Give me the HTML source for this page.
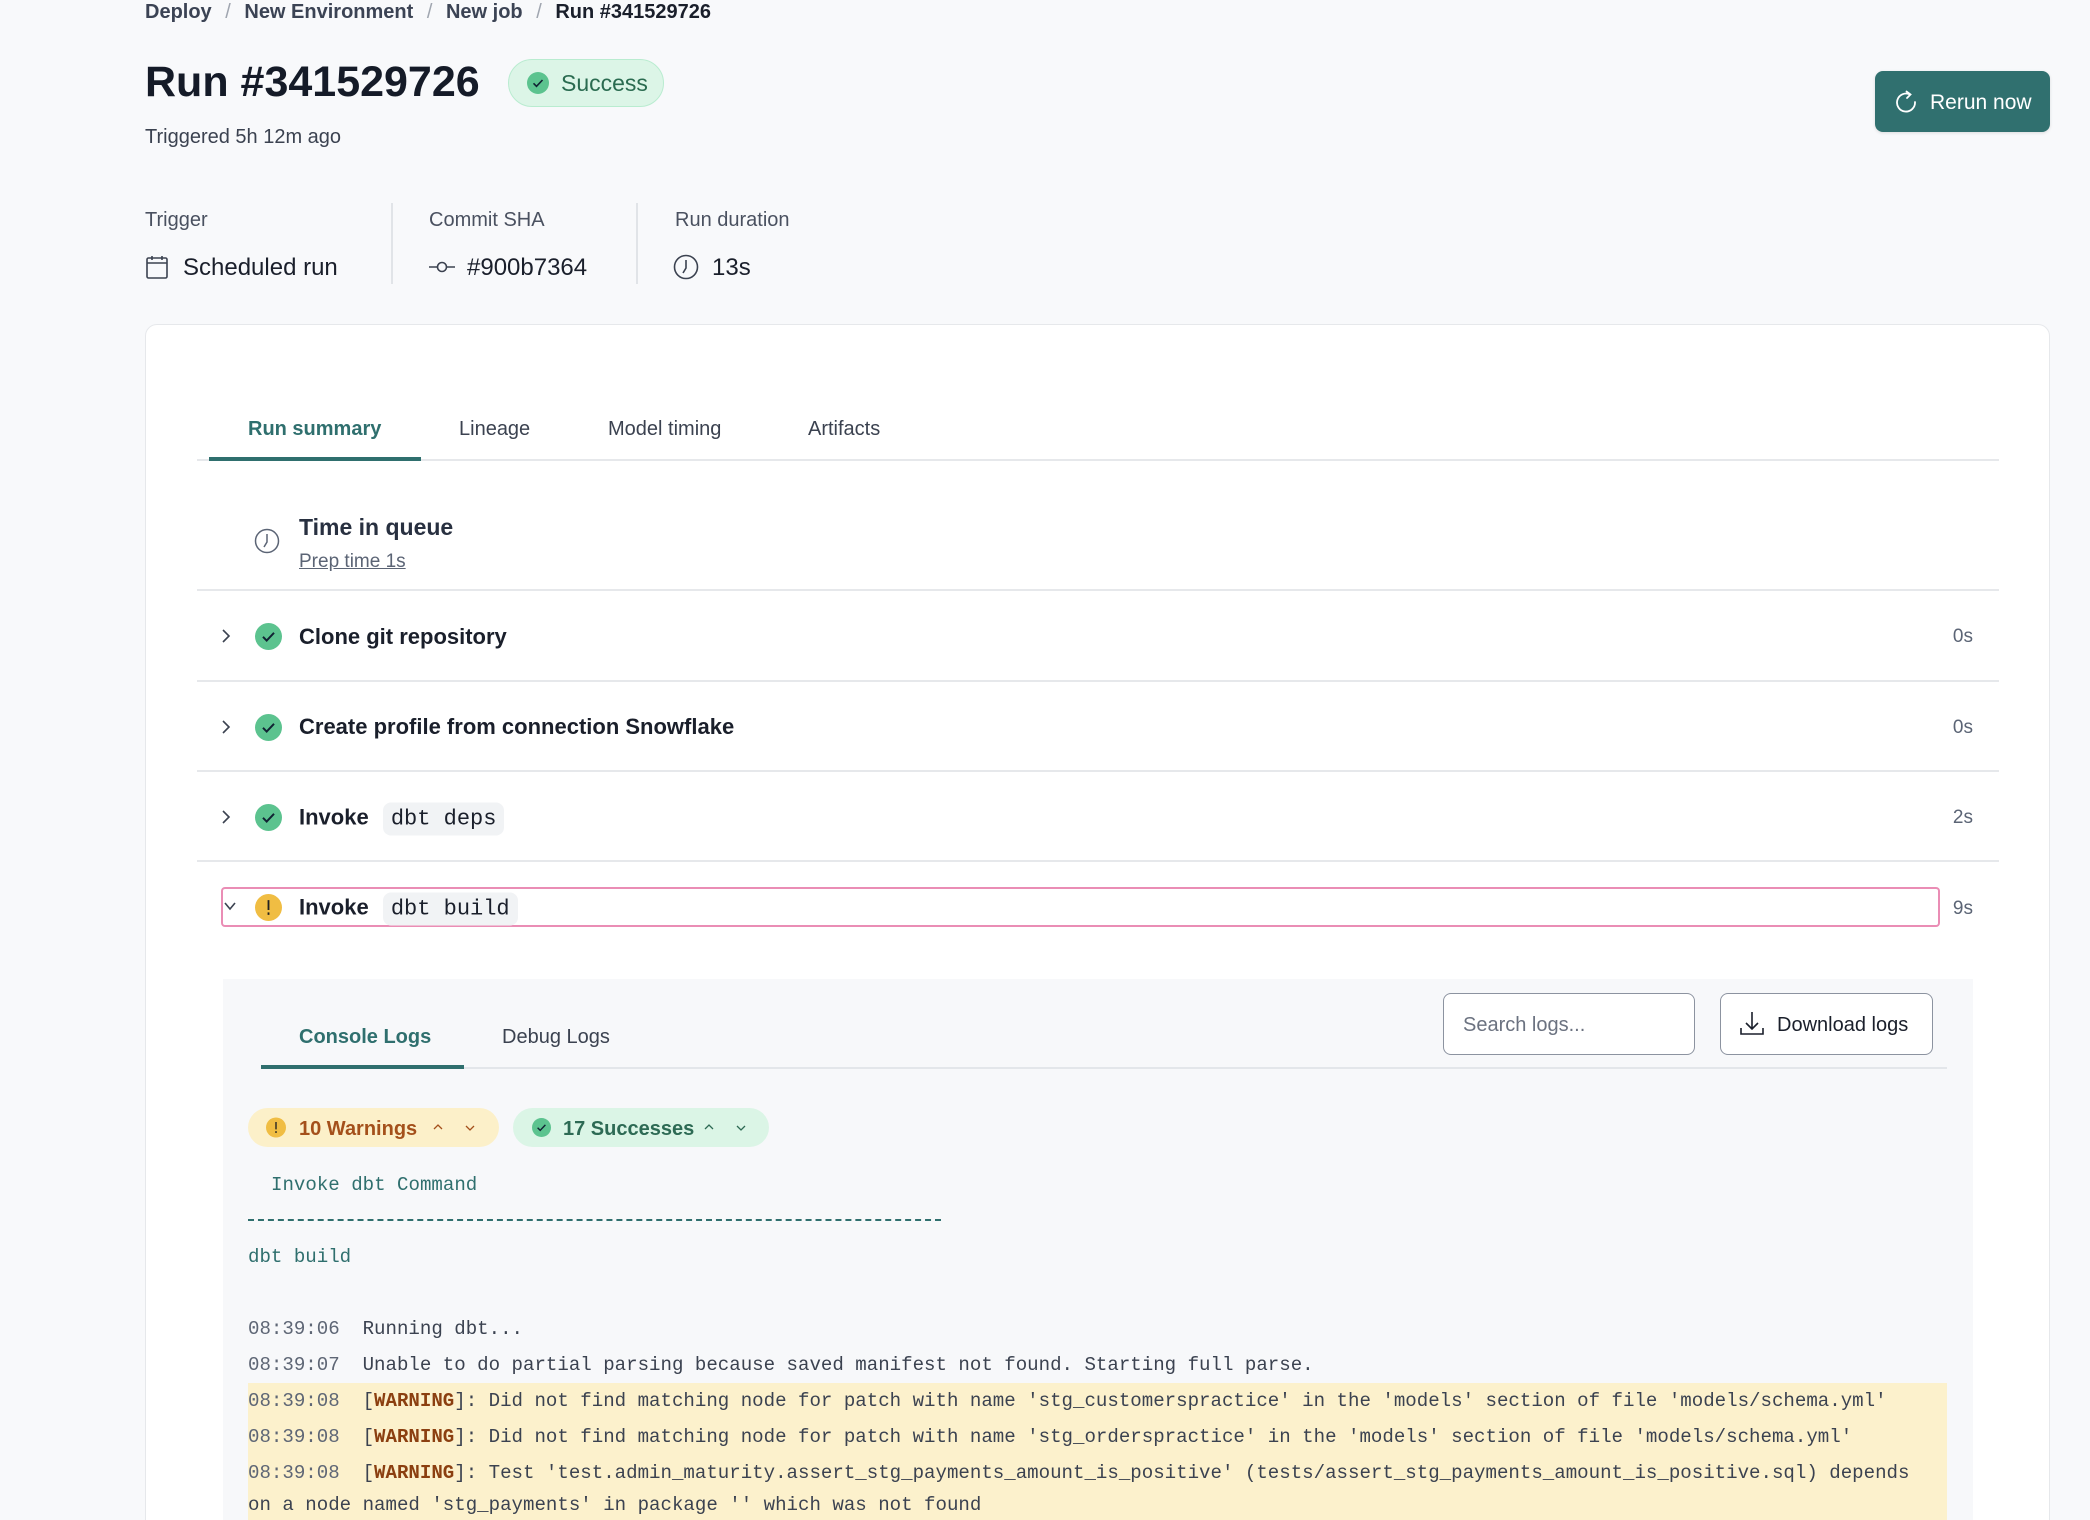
<!DOCTYPE html>
<html><head><meta charset="utf-8"><style>
*{margin:0;padding:0;box-sizing:border-box}
html{width:2090px;height:1520px;overflow:hidden}
body{width:2090px;height:1520px;background:#f8f9fb;font-family:"Liberation Sans",sans-serif;color:#1c2330;position:relative;overflow:hidden}
.a{position:absolute;white-space:nowrap}
.ico{position:absolute}
.row{position:absolute;left:197px;width:1802px;border-top:2px solid #e6e8eb}
.stepname{position:absolute;left:299px;font-weight:bold;font-size:22px;color:#1a1f2b;transform:translateY(-50%);white-space:nowrap}
.code{background:#f1f3f5;border-radius:8px;padding:4px 8px;font-family:"Liberation Mono",monospace;font-weight:normal;font-size:22px;margin-left:8px}
.dur{position:absolute;right:117px;font-size:19px;color:#5b6475;transform:translateY(-50%)}
.log{position:absolute;left:248px;font-family:"Liberation Mono",monospace;font-size:19.1px;color:#3b4250;white-space:pre;line-height:36px}
.ts{color:#5e6675}
.w{color:#8b3f10;font-weight:bold}
</style></head><body>

<div class="a" style="left:145px;top:1px;font-size:20px;color:#3b4354;font-weight:bold">Deploy <span style="color:#a0a6b0;font-weight:normal;margin:0 8px">/</span> New Environment <span style="color:#a0a6b0;font-weight:normal;margin:0 8px">/</span> New job <span style="color:#a0a6b0;font-weight:normal;margin:0 8px">/</span> <span style="color:#1a1f2b">Run #341529726</span></div>

<div class="a" style="left:145px;top:58px;font-size:43px;font-weight:bold;color:#151b28">Run #341529726</div>
<div class="a" style="left:508px;top:59px;width:156px;height:48px;background:#dcf5e7;border:1.5px solid #b9ecd0;border-radius:24px"></div>
<svg class="ico" style="left:527px;top:72px" width="22" height="22" viewBox="0 0 22 22"><circle cx="11" cy="11" r="11" fill="#5cc38f"/><path d="M6.5 11.3l3 3 6-6.3" stroke="#123" stroke-width="1.6" fill="none"/></svg>
<div class="a" style="left:561px;top:70px;font-size:23px;color:#2a6b50">Success</div>
<div class="a" style="left:145px;top:126px;font-size:20px;color:#3b4250">Triggered 5h 12m ago</div>

<div class="a" style="left:1875px;top:71px;width:175px;height:61px;background:#30706f;border-radius:8px;box-shadow:0 1px 3px rgba(0,0,0,.12)"></div>
<svg class="ico" style="left:1894px;top:89px" width="24" height="26" viewBox="0 0 24 26"><path d="M16 5.5A9 9 0 1 0 21 13" stroke="#fff" stroke-width="1.8" fill="none" stroke-linecap="round"/><path d="M12.5 2.5L16.5 5.5L13 9" stroke="#fff" stroke-width="1.8" fill="none" stroke-linecap="round"/></svg>
<div class="a" style="left:1930px;top:91px;font-size:21px;color:#fff">Rerun now</div>

<div class="a" style="left:145px;top:209px;font-size:20px;color:#4a5160">Trigger</div>
<div class="a" style="left:429px;top:209px;font-size:20px;color:#4a5160">Commit SHA</div>
<div class="a" style="left:675px;top:209px;font-size:20px;color:#4a5160">Run duration</div>
<div class="a" style="left:391px;top:203px;width:1.5px;height:81px;background:#e1e4e8"></div>
<div class="a" style="left:636px;top:203px;width:1.5px;height:81px;background:#e1e4e8"></div>
<svg class="ico" style="left:146px;top:255px" width="22" height="24" viewBox="0 0 22 24"><rect x="1" y="3" width="20" height="20" rx="1.5" stroke="#3b4250" stroke-width="1.6" fill="none"/><path d="M1 8h20M6 1v4M16 1v4" stroke="#3b4250" stroke-width="1.6"/></svg>
<div class="a" style="left:183px;top:254px;font-size:24px;color:#1a1f2b">Scheduled run</div>
<svg class="ico" style="left:429px;top:260px" width="26" height="14" viewBox="0 0 26 14"><path d="M0 7h8M18 7h8" stroke="#3b4250" stroke-width="1.6"/><circle cx="13" cy="7" r="4.5" stroke="#3b4250" stroke-width="1.6" fill="none"/></svg>
<div class="a" style="left:467px;top:254px;font-size:24px;color:#1a1f2b">#900b7364</div>
<svg class="ico" style="left:673px;top:254px" width="26" height="26" viewBox="0 0 26 26"><circle cx="13" cy="13" r="11.5" stroke="#3b4250" stroke-width="1.6" fill="none"/><path d="M13 6v8l-3 5" stroke="#3b4250" stroke-width="1.6" fill="none"/></svg>
<div class="a" style="left:712px;top:254px;font-size:24px;color:#1a1f2b">13s</div>

<div class="a" style="left:145px;top:324px;width:1905px;height:1220px;background:#fff;border:1.5px solid #e6e8eb;border-radius:12px"></div>

<div class="a" style="left:197px;top:459px;width:1802px;height:2px;background:#e6e8eb"></div>
<div class="a" style="left:209px;top:457px;width:212px;height:4px;background:#2f6f6e"></div>
<div class="a" style="left:248px;top:418px;font-size:20px;color:#2f6f6e;font-weight:bold">Run summary</div>
<div class="a" style="left:459px;top:418px;font-size:20px;color:#3b4250">Lineage</div>
<div class="a" style="left:608px;top:418px;font-size:20px;color:#3b4250">Model timing</div>
<div class="a" style="left:808px;top:418px;font-size:20px;color:#3b4250">Artifacts</div>

<svg class="ico" style="left:254px;top:528px" width="26" height="26" viewBox="0 0 26 26"><circle cx="13" cy="13" r="11.5" stroke="#5b6475" stroke-width="1.5" fill="none"/><path d="M13 6v8l-3 5" stroke="#5b6475" stroke-width="1.5" fill="none"/></svg>
<div class="a" style="left:299px;top:514px;font-size:23px;font-weight:bold;color:#283040">Time in queue</div>
<div class="a" style="left:299px;top:551px;font-size:19px;color:#5b6475;text-decoration:underline">Prep time 1s</div>

<div class="row" style="top:589px"></div>
<div class="row" style="top:680px"></div>
<div class="row" style="top:770px"></div>
<div class="row" style="top:860px"></div>

<svg class="ico" style="left:220px;top:627px" width="12" height="18" viewBox="0 0 12 18"><path d="M3 3l6 6-6 6" stroke="#3b4250" stroke-width="1.6" fill="none"/></svg>
<svg class="ico" style="left:255px;top:623px" width="27" height="27" viewBox="0 0 22 22"><circle cx="11" cy="11" r="11" fill="#5cc38f"/><path d="M6.5 11.3l3 3 6-6.3" stroke="#123" stroke-width="1.6" fill="none"/></svg>
<div class="stepname" style="top:637px">Clone git repository</div>
<div class="dur" style="top:637px">0s</div>

<svg class="ico" style="left:220px;top:718px" width="12" height="18" viewBox="0 0 12 18"><path d="M3 3l6 6-6 6" stroke="#3b4250" stroke-width="1.6" fill="none"/></svg>
<svg class="ico" style="left:255px;top:714px" width="27" height="27" viewBox="0 0 22 22"><circle cx="11" cy="11" r="11" fill="#5cc38f"/><path d="M6.5 11.3l3 3 6-6.3" stroke="#123" stroke-width="1.6" fill="none"/></svg>
<div class="stepname" style="top:727px">Create profile from connection Snowflake</div>
<div class="dur" style="top:728px">0s</div>

<svg class="ico" style="left:220px;top:808px" width="12" height="18" viewBox="0 0 12 18"><path d="M3 3l6 6-6 6" stroke="#3b4250" stroke-width="1.6" fill="none"/></svg>
<svg class="ico" style="left:255px;top:804px" width="27" height="27" viewBox="0 0 22 22"><circle cx="11" cy="11" r="11" fill="#5cc38f"/><path d="M6.5 11.3l3 3 6-6.3" stroke="#123" stroke-width="1.6" fill="none"/></svg>
<div class="stepname" style="top:818px">Invoke <span class="code">dbt deps</span></div>
<div class="dur" style="top:818px">2s</div>

<div class="a" style="left:221px;top:887px;width:1719px;height:40px;border:2.5px solid #ea8db5;border-radius:4px"></div>
<svg class="ico" style="left:222px;top:900px" width="16" height="12" viewBox="0 0 16 12"><path d="M3 3l5 6 5-6" stroke="#3b4250" stroke-width="1.6" fill="none"/></svg>
<svg class="ico" style="left:255px;top:894px" width="27" height="27" viewBox="0 0 22 22"><circle cx="11" cy="11" r="11" fill="#f0bd43"/><path d="M11 5v8M11 15v2" stroke="#222" stroke-width="1.5"/></svg>
<div class="stepname" style="top:908px">Invoke <span class="code">dbt build</span></div>
<div class="dur" style="top:909px">9s</div>

<div class="a" style="left:223px;top:979px;width:1750px;height:600px;background:#f7f8fa"></div>
<div class="a" style="left:261px;top:1067px;width:1686px;height:2px;background:#e3e6ea"></div>
<div class="a" style="left:261px;top:1065px;width:203px;height:4px;background:#2f6f6e"></div>
<div class="a" style="left:299px;top:1026px;font-size:20px;color:#2f6f6e;font-weight:bold">Console Logs</div>
<div class="a" style="left:502px;top:1026px;font-size:20px;color:#3b4250">Debug Logs</div>

<div class="a" style="left:1443px;top:993px;width:252px;height:62px;background:#fff;border:1.5px solid #8c93a0;border-radius:8px"></div>
<div class="a" style="left:1463px;top:1014px;font-size:20px;color:#6b7280">Search logs...</div>
<div class="a" style="left:1720px;top:993px;width:213px;height:62px;background:#fff;border:1.5px solid #8c93a0;border-radius:8px"></div>
<svg class="ico" style="left:1739px;top:1010px" width="26" height="26" viewBox="0 0 26 26"><path d="M13 2v17M7 13l6 6 6-6" stroke="#1a1f2b" stroke-width="1.6" fill="none"/><path d="M2 18v6h22v-6" stroke="#1a1f2b" stroke-width="1.6" fill="none"/></svg>
<div class="a" style="left:1777px;top:1014px;font-size:20px;color:#1a1f2b">Download logs</div>

<div class="a" style="left:248px;top:1108px;width:251px;height:39px;background:#fcf0c9;border-radius:20px"></div>
<svg class="ico" style="left:266px;top:1117px" width="20" height="21" viewBox="0 0 22 22"><circle cx="11" cy="11" r="11" fill="#f0bd43"/><path d="M11 5v8M11 15v2" stroke="#222" stroke-width="1.5"/></svg>
<div class="a" style="left:299px;top:1118px;font-size:20px;color:#a4501b;font-weight:bold">10 Warnings</div>
<svg class="ico" style="left:432px;top:1123px" width="12" height="8" viewBox="0 0 12 8"><path d="M2 6l4-4 4 4" stroke="#a4501b" stroke-width="1.3" fill="none"/></svg>
<svg class="ico" style="left:464px;top:1124px" width="12" height="8" viewBox="0 0 12 8"><path d="M2 2l4 4 4-4" stroke="#a4501b" stroke-width="1.3" fill="none"/></svg>

<div class="a" style="left:513px;top:1108px;width:256px;height:39px;background:#dbf5e6;border-radius:20px"></div>
<svg class="ico" style="left:532px;top:1118px" width="19" height="19" viewBox="0 0 22 22"><circle cx="11" cy="11" r="11" fill="#5cc38f"/><path d="M6.5 11.3l3 3 6-6.3" stroke="#123" stroke-width="1.6" fill="none"/></svg>
<div class="a" style="left:563px;top:1118px;font-size:20px;color:#2d6a54;font-weight:bold">17 Successes</div>
<svg class="ico" style="left:703px;top:1123px" width="12" height="8" viewBox="0 0 12 8"><path d="M2 6l4-4 4 4" stroke="#2d6a54" stroke-width="1.3" fill="none"/></svg>
<svg class="ico" style="left:735px;top:1124px" width="12" height="8" viewBox="0 0 12 8"><path d="M2 2l4 4 4-4" stroke="#2d6a54" stroke-width="1.3" fill="none"/></svg>

<div class="log" style="top:1167px;left:271px;color:#2f6f6e">Invoke dbt Command</div>
<div class="a" style="left:248px;top:1219px;width:693px;border-top:2px dashed #2f6f6e"></div>
<div class="log" style="top:1239px;color:#2f6f6e">dbt build</div>

<div class="a" style="left:248px;top:1383px;width:1699px;height:140px;background:#fcf1cc"></div>
<div class="log" style="top:1311px"><span class="ts">08:39:06</span>  Running dbt...</div>
<div class="log" style="top:1347px"><span class="ts">08:39:07</span>  Unable to do partial parsing because saved manifest not found. Starting full parse.</div>
<div class="log" style="top:1383px"><span class="ts">08:39:08</span>  [<span class="w">WARNING</span>]: Did not find matching node for patch with name 'stg_customerspractice' in the 'models' section of file 'models/schema.yml'</div>
<div class="log" style="top:1419px"><span class="ts">08:39:08</span>  [<span class="w">WARNING</span>]: Did not find matching node for patch with name 'stg_orderspractice' in the 'models' section of file 'models/schema.yml'</div>
<div class="log" style="top:1455px"><span class="ts">08:39:08</span>  [<span class="w">WARNING</span>]: Test 'test.admin_maturity.assert_stg_payments_amount_is_positive' (tests/assert_stg_payments_amount_is_positive.sql) depends</div>
<div class="log" style="top:1487px">on a node named 'stg_payments' in package '' which was not found</div>

</body></html>
